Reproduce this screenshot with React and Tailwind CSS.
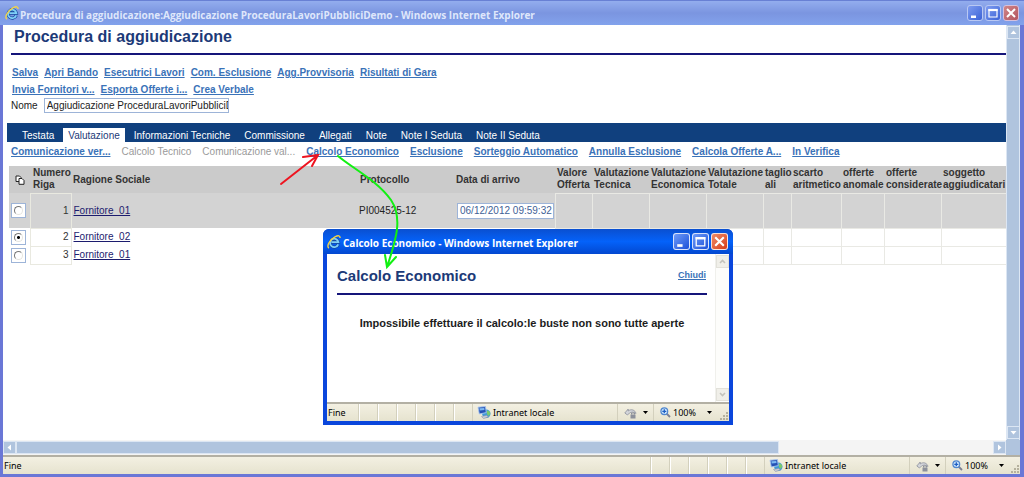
import React, { useState } from 'react';

const topActions = [
  ['Salva', 'Apri Bando', 'Esecutrici Lavori', 'Com. Esclusione', 'Agg.Provvisoria', 'Risultati di Gara'],
  ['Invia Fornitori v...', 'Esporta Offerte i...', 'Crea Verbale'],
];

const tabs = ['Testata', 'Valutazione', 'Informazioni Tecniche', 'Commissione', 'Allegati', 'Note', 'Note I Seduta', 'Note II Seduta'];

const tabActions = [
  { label: 'Comunicazione ver...' },
  { label: 'Calcolo Tecnico', disabled: true },
  { label: 'Comunicazione val...', disabled: true },
  { label: 'Calcolo Economico' },
  { label: 'Esclusione' },
  { label: 'Sorteggio Automatico' },
  { label: 'Annulla Esclusione' },
  { label: 'Calcola Offerte A...' },
  { label: 'In Verifica' },
];

const scoreColumns = [
  { label: 'Valore Offerta', width: 'w-[37px]' },
  { label: 'Valutazione Tecnica', width: 'w-[57px]' },
  { label: 'Valutazione Economica', width: 'w-[57px]' },
  { label: 'Valutazione Totale', width: 'w-[57px]' },
  { label: 'taglio ali', width: 'w-[28px]' },
  { label: 'scarto aritmetico', width: 'w-[50px]' },
  { label: 'offerte anomale', width: 'w-[43px]' },
  { label: 'offerte considerate', width: 'w-[57px]' },
  { label: 'soggetto aggiudicatari', width: 'w-[65px]' },
];

const rows = [
  { id: 1, name: 'Fornitore_01', protocol: 'PI004525-12', date: '06/12/2012 09:59:32' },
  { id: 2, name: 'Fornitore_02' },
  { id: 3, name: 'Fornitore_01' },
];

const IeLogo = () => (
  <svg viewBox="0 0 14 14" className="w-3.5 h-3.5 shrink-0" aria-hidden="true">
    <path d="M11.2 9.4A4.2 4.2 0 1 1 11.4 7.2H4.4" fill="none" stroke="#174a9e" strokeWidth="3.2" />
    <path d="M11.2 9.4A4.2 4.2 0 1 1 11.4 7.2H4.4" fill="none" stroke="#7fd0f7" strokeWidth="1.8" />
    <path d="M2 13C-1 12 2.5 4.5 8 1.8C11 .3 13.3.3 13 3" fill="none" stroke="#f3d34a" strokeWidth="1.4" />
  </svg>
);

const WindowButtons = ({ inactive }) => {
  const size = inactive ? 'w-4 h-4' : 'w-[17px] h-[17px]';
  const blue = inactive
    ? 'border-[#b9c8f3] bg-gradient-to-br from-[#7f9cf0] to-[#3c62d6]'
    : 'border-white/80 bg-gradient-to-br from-[#6f9af8] to-[#1c4fd8]';
  const red = inactive
    ? 'border-[#d6c0dc] bg-gradient-to-br from-[#cf8588] to-[#b35560]'
    : 'border-white/80 bg-gradient-to-br from-[#f08a66] to-[#d63a12]';
  return (
    <div className="flex gap-[2px] shrink-0">
      <button aria-label="Riduci a icona" className={`rounded-[3px] border ${size} ${blue}`}>
        <svg viewBox="0 0 14 14" className="w-full h-full"><path d="M3 9.500h5v2.500H3z" fill="#fff" /></svg>
      </button>
      <button aria-label="Ingrandisci" className={`rounded-[3px] border ${size} ${blue}`}>
        <svg viewBox="0 0 14 14" className="w-full h-full">
          <path d="M3 3.500h8v7.500H3z" fill="none" stroke="#fff" strokeWidth="1.2" />
          <path d="M2.400 2.900h9.200v2.200H2.400z" fill="#fff" />
        </svg>
      </button>
      <button aria-label="Chiudi finestra" className={`rounded-[3px] border ${size} ${red}`}>
        <svg viewBox="0 0 14 14" className="w-full h-full">
          <path d="M3 3l8 8M11 3l-8 8" stroke="#fff" strokeWidth="2" />
        </svg>
      </button>
    </div>
  );
};

const Caret = () => (
  <svg viewBox="0 0 5 3" className="w-[5px] h-[3px] shrink-0" aria-hidden="true"><path d="M0 0h5L2.5 3z" fill="#000" /></svg>
);

const StatusBar = ({ compact }) => (
  <footer className="flex h-[19px] shrink-0 items-stretch border-t-2 border-[#b3b0a4] bg-gradient-to-b from-[#f3f0e2] to-[#e6e3cf] text-[9px] text-black font-['Noto_Sans',sans-serif]">
    <span className={`flex items-center pl-px ${compact ? 'w-[31px]' : 'flex-1'}`}>Fine</span>
    {[0, 1, 2, 3, 4, 5].map(i => (
      <span key={i} className="w-[19px] border-l border-[#d3d0bd] shadow-[inset_1px_0_0_#fff]" />
    ))}
    <span className="flex w-[145px] items-center gap-[2px] border-l border-[#d3d0bd] pl-1 whitespace-nowrap">
      <svg viewBox="0 0 14 13" className="w-3.5 h-[13px] shrink-0" aria-hidden="true">
        <circle cx="9.3" cy="7.8" r="4.2" fill="#3f9ad8" />
        <path d="M10 4.5c1.500 0 3 1 3.300 3l-1.500 2.500-2-2z" fill="#7cc96a" />
        <path d="M1 1.200l7.500-.6.8 6L2.300 8z" fill="#2450b4" stroke="#a9c6ee" strokeWidth=".9" />
        <path d="M2.300 2.300l5-.4.2 2.100-4.800.6z" fill="#7db8f2" />
        <path d="M4.500 10.500l5-1.200 2 1.700-5 1.600z" fill="#c7cbd6" stroke="#8089a0" strokeWidth=".5" />
      </svg>
      Intranet locale
    </span>
    <button aria-label="Modalità protetta" className="flex w-9 items-center gap-1.5 border-l border-[#d3d0bd] pl-1.5">
      <svg viewBox="0 0 13 13" className="w-[13px] h-[13px] shrink-0" aria-hidden="true">
        <path d="M.8 7l3.400-4v2c3-2.500 7-1 7.800 2.500-2.500-2-5-1.500-6.500-.5L3.500 9z" fill="#d3d5da" stroke="#8d919c" strokeWidth=".8" />
        <rect x="6.500" y="8.500" width="5" height="4" fill="#8c909b" />
        <path d="M7.500 8.500V7h3v1.500" fill="none" stroke="#8c909b" />
      </svg>
      <Caret />
    </button>
    <button className="flex items-center gap-[2px] border-l border-[#d3d0bd] pl-1.5">
      <svg viewBox="0 0 11 11" className="w-[11px] h-[11px] shrink-0" aria-hidden="true">
        <path d="M6.5 6.5l3.500 3.500" stroke="#7b7f93" strokeWidth="1.8" />
        <circle cx="4.3" cy="4.3" r="3.4" fill="#cfe6fb" stroke="#4f86cf" strokeWidth="1.2" />
        <path d="M4.3 2.3v4M2.3 4.3h4" stroke="#1d5fc4" strokeWidth="1.3" />
      </svg>
      <span className="w-8 text-left">100%</span>
      <Caret />
    </button>
    <span className="ml-auto flex w-4 items-end justify-end">
      <svg viewBox="0 0 10 10" className="w-2.5 h-2.5" aria-hidden="true">
        <path d="M7 1h2v2H7zM7 4h2v2H7zM4 4h2v2H4zM7 7h2v2H7zM4 7h2v2H4zM1 7h2v2H1z" fill="#b5b19d" />
      </svg>
    </span>
  </footer>
);

const ScrollButton = ({ label, d, disabled }) => (
  <button
    aria-label={label}
    disabled={disabled}
    className={`w-[13px] h-[13px] shrink-0 border ${disabled ? 'bg-[#f0efe9] border-[#e2e1da] text-[#c4c3bc]' : 'bg-[#b0c4de] border-[#dce6f3] text-white'}`}
  >
    <svg viewBox="0 0 11 11" className="w-full h-full">
      {disabled
        ? <path d={d} fill="none" stroke="currentColor" strokeWidth="1.6" />
        : <path d={d} fill="currentColor" />}
    </svg>
  </button>
);

const ResultsTable = () => {
  const [selected, setSelected] = useState(2);

  return (
    <table className="w-full table-fixed border-collapse text-[10px] leading-3 text-[#333]">
      <thead>
        <tr className="h-[27px] bg-[#cbcbcb] text-left align-middle">
          <th className="w-[21px] p-0">
            <svg viewBox="0 0 10 10" className="mx-auto w-2.5 h-2.5" aria-label="Seleziona" role="img">
              <path d="M1 1h3.500L6 2.500V6.500H1z" fill="#fff" stroke="#222" />
              <path d="M4 3.500h3L9 5.500V9.300H4z" fill="#fff" stroke="#222" />
            </svg>
          </th>
          <th className="w-[41px] p-0 pl-[3px]">Numero Riga</th>
          <th className="p-0 pl-[2px]">Ragione Sociale</th>
          <th className="w-24 p-0 pl-[3px]">Protocollo</th>
          <th className="w-[102px] p-0 pl-[3px]">Data di arrivo</th>
          {scoreColumns.map(c => (
            <th key={c.label} className={`p-0 pl-[2px] ${c.width}`}>{c.label}</th>
          ))}
        </tr>
      </thead>
      <tbody>
        {rows.map(r => (
          <tr key={r.id} className={r.protocol ? 'h-[35px] bg-[#d3d3d3]' : 'h-[18px]'}>
            <td className="p-0">
              <label className="ml-[2px] flex w-[15px] h-[15px] items-center justify-center border border-[#9db4d8] bg-white">
                <input
                  type="radio"
                  name="fornitore"
                  aria-label={`Riga ${r.id}`}
                  checked={selected === r.id}
                  onChange={() => setSelected(r.id)}
                  className="w-[9px] h-[9px] appearance-none rounded-full border border-t-[#777] border-l-[#777] border-r-[#e5e5e0] border-b-[#e5e5e0] bg-white checked:bg-[radial-gradient(circle,#000_0_1px,#fff_2px)]"
                />
              </label>
            </td>
            <td className="border border-[#e9e9e0] p-0 pr-[2px] text-right">{r.id}</td>
            <td className="p-0 pl-[2px]"><a href="#fornitore" className="text-[#1c1c6e] underline">{r.name}</a></td>
            <td className="p-0 pl-[2px] text-[#222]">{r.protocol}</td>
            <td className="p-0 pl-1">
              {r.date && (
                <span className="flex h-4 w-[97px] items-center border border-[#9db4d8] bg-white pl-[2px] text-[#3f5f96]">{r.date}</span>
              )}
            </td>
            {scoreColumns.map(c => <td key={c.label} className="border border-r-0 border-[#e9e9e4]" />)}
          </tr>
        ))}
      </tbody>
    </table>
  );
};

const CalcDialog = () => (
  <div role="dialog" aria-labelledby="calc-title" className="absolute left-[320px] top-[229px] flex h-[196px] w-[410px] flex-col rounded-t-md bg-[#0a46dc] px-1 pb-1">
    <header className="-mx-1 flex h-[25px] shrink-0 items-center gap-[2px] rounded-t-md bg-gradient-to-b from-[#0a4fd0] via-[#0462fa] to-[#0348d0] pl-1 pr-[5px]">
      <IeLogo />
      <span className="flex-1 pt-1 text-[10px] font-bold text-white font-['Open_Sans',sans-serif]">Calcolo Economico - Windows Internet Explorer</span>
      <WindowButtons />
    </header>
    <div className="flex flex-1 bg-white">
      <div className="flex-1 pl-2.5 pr-2 pt-3">
        <div className="flex items-center justify-between border-b-2 border-[#15157a] pb-[7px] pr-px">
          <h2 id="calc-title" className="text-[15px] leading-5 font-bold text-[#1c3a78]">Calcolo Economico</h2>
          <button className="text-[9px] font-bold text-[#3a72b8] underline">Chiudi</button>
        </div>
        <p className="mt-5 text-center text-[11px] font-bold text-[#1c1c1c] whitespace-nowrap">
          Impossibile effettuare il calcolo:le buste non sono tutte aperte
        </p>
      </div>
      <div className="flex w-3.5 flex-col items-center justify-between border-l border-[#f0f0ec] bg-[#fdfdfb] py-px">
        <ScrollButton label="Scorri in alto" d="M3 7l2.500-2.500L8 7" disabled />
        <ScrollButton label="Scorri in basso" d="M3 4l2.500 2.500L8 4" disabled />
      </div>
    </div>
    <StatusBar compact />
  </div>
);

const GuideArrows = () => (
  <svg className="pointer-events-none absolute -left-[3px] top-0" width="420" height="280" fill="none" strokeLinecap="round" aria-hidden="true">
    <g stroke="#ee1420" strokeWidth="2">
      <path d="M281 184L318 155M303 157l15-2-6 11" />
    </g>
    <g stroke="#12f012" strokeWidth="2">
      <path d="M338 156C352 168 378 181 391 200C403 218 396 240 387 267M385 255l2 12 9-10" />
    </g>
  </svg>
);

export default function App() {
  const [activeTab, setActiveTab] = useState('Valutazione');

  return (
    <div className="relative flex min-h-screen flex-col border-l-[3px] border-r-4 border-b-[3px] border-[#6a77d6] bg-white font-['Liberation_Sans',Arial,sans-serif]">
      <header className="-ml-[3px] -mr-1 flex h-[25px] shrink-0 items-center gap-px border-t border-[#6880d4] bg-gradient-to-b from-[#93adee] via-[#7b95e0] to-[#82a2ec] pl-[5px] pr-[5px]">
        <IeLogo />
        <span className="flex-1 pt-1 text-[10px] font-bold text-[#dfe7fb] font-['Open_Sans',sans-serif]">
          Procedura di aggiudicazione:Aggiudicazione ProceduraLavoriPubbliciDemo - Windows Internet Explorer
        </span>
        <WindowButtons inactive />
      </header>

      <div className="flex flex-1">
        <main className="min-w-0 flex-1 overflow-hidden">
          <div className="ml-2 border-b-2 border-[#15157a] pb-1 pl-[3px]">
            <h1 className="text-[16px] leading-6 font-bold text-[#1c3a78]">Procedura di aggiudicazione</h1>
          </div>

          <nav className="mt-[9px] pl-[9px] text-[10px] leading-[17px] font-bold">
            {topActions.map((line, i) => (
              <div key={i} className="flex gap-1.5">
                {line.map(a => (
                  <a key={a} href="#azione" className="text-[#3a72b8] underline whitespace-nowrap">{a}</a>
                ))}
              </div>
            ))}
          </nav>

          <div className="flex items-center gap-1.5 pl-2 text-[10px] text-[#222]">
            <label htmlFor="nome">Nome</label>
            <input id="nome" defaultValue="Aggiudicazione ProceduraLavoriPubbliciDemo" className="h-[15px] w-[185px] border border-[#9db4d8] pl-[2px]" />
          </div>

          <div role="tablist" className="mt-[10px] ml-1 flex h-[19px] items-end bg-[#10407e] pl-2 text-[10px] text-white">
            {tabs.map(t => (
              <button
                key={t}
                role="tab"
                aria-selected={t === activeTab}
                onClick={() => setActiveTab(t)}
                className={t === activeTab ? 'mx-[2px] h-3.5 bg-white px-[5px] text-[#1c3a78]' : 'h-3.5 px-[7px]'}
              >
                {t}
              </button>
            ))}
          </div>

          <nav className="flex gap-[11px] pl-2 pt-[2px] text-[10px] leading-4">
            {tabActions.map(a => (
              <a
                key={a.label}
                href="#azione"
                aria-disabled={a.disabled}
                className={`whitespace-nowrap ${a.disabled ? 'text-[#9a9a9a]' : 'font-bold text-[#3a72b8] underline'}`}
              >
                {a.label}
              </a>
            ))}
          </nav>

          <div className="mt-1.5 pl-1.5">
            <ResultsTable />
          </div>
        </main>

        <div className="flex w-[14px] shrink-0 flex-col items-center justify-between border-x border-[#dce6f3] bg-[#b0c4de] py-px">
          <ScrollButton label="Su" d="M5.500 3.500L8.500 7h-6z" />
          <ScrollButton label="Giù" d="M5.500 7.500L8.500 4h-6z" />
        </div>
      </div>

      <div className="flex h-[15px] shrink-0 items-center bg-[#f4f4f4]">
        <ScrollButton label="Sinistra" d="M3.500 5.500L7 2.500v6z" />
        <div className="h-[13px] w-[75%] border border-[#dce6f3] bg-[#b0c4de]" />
        <div className="flex-1" />
        <ScrollButton label="Destra" d="M7.500 5.500L4 2.500v6z" />
        <div className="h-full w-3.5 bg-[#b0c4de]" />
      </div>

      <StatusBar />

      <CalcDialog />
      <GuideArrows />
    </div>
  );
}
